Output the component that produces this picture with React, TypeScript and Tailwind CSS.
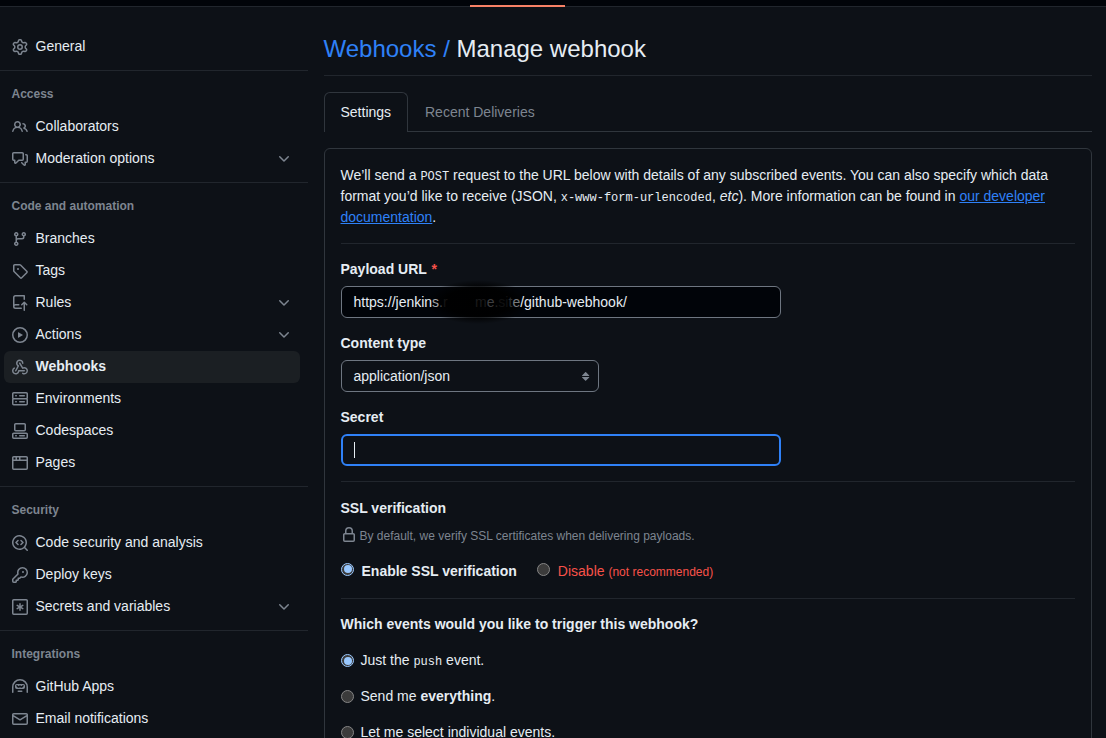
import type { ReactNode } from "react";

const ICONS = {
  gear: "M8 0a8.2 8.2 0 0 1 .701.031C9.444.095 9.99.645 10.16 1.29l.288 1.107c.018.066.079.158.212.224.231.114.454.243.668.386.123.082.233.09.299.071l1.103-.303c.644-.176 1.392.021 1.82.63.27.385.506.792.704 1.218.315.675.111 1.422-.364 1.891l-.814.806c-.049.048-.098.147-.088.294.016.257.016.515 0 .772-.01.147.038.246.088.294l.814.806c.475.469.679 1.216.364 1.891a7.977 7.977 0 0 1-.704 1.217c-.428.61-1.176.807-1.82.63l-1.102-.302c-.067-.019-.177-.011-.3.071a5.909 5.909 0 0 1-.668.386c-.133.066-.194.158-.211.224l-.29 1.106c-.168.646-.715 1.196-1.458 1.26a8.006 8.006 0 0 1-1.402 0c-.743-.064-1.289-.614-1.458-1.26l-.289-1.106c-.018-.066-.079-.158-.212-.224a5.738 5.738 0 0 1-.668-.386c-.123-.082-.233-.09-.299-.071l-1.103.303c-.644.176-1.392-.021-1.82-.63a8.12 8.12 0 0 1-.704-1.218c-.315-.675-.111-1.422.363-1.891l.815-.806c.05-.048.098-.147.088-.294a6.214 6.214 0 0 1 0-.772c.01-.147-.038-.246-.088-.294l-.815-.806C.635 6.045.431 5.298.746 4.623a7.92 7.92 0 0 1 .704-1.217c.428-.61 1.176-.807 1.82-.63l1.102.302c.067.019.177.011.3-.071.214-.143.437-.272.668-.386.133-.066.194-.158.211-.224l.29-1.106C6.009.645 6.556.095 7.299.03 7.53.01 7.764 0 8 0Zm-.571 1.525c-.036.003-.108.036-.137.146l-.289 1.105c-.147.561-.549.967-.998 1.189-.173.086-.34.183-.5.29-.417.278-.97.423-1.529.27l-1.103-.303c-.109-.03-.175.016-.195.045-.22.312-.412.644-.573.99-.014.031-.021.11.059.19l.815.806c.411.406.562.957.53 1.456a4.709 4.709 0 0 0 0 .582c.032.499-.119 1.05-.53 1.456l-.815.806c-.081.08-.073.159-.059.19.162.346.353.677.573.989.02.03.085.076.195.046l1.102-.303c.56-.153 1.113-.008 1.53.27.161.107.328.204.501.29.447.222.85.629.997 1.189l.289 1.105c.029.109.101.143.137.146a6.6 6.6 0 0 0 1.142 0c.036-.003.108-.036.137-.146l.289-1.105c.147-.561.549-.967.998-1.189.173-.086.34-.183.5-.29.417-.278.97-.423 1.529-.27l1.103.303c.109.029.175-.016.195-.045.22-.313.411-.644.573-.99.014-.031.021-.11-.059-.19l-.815-.806c-.411-.406-.562-.957-.53-1.456a4.709 4.709 0 0 0 0-.582c-.032-.499.119-1.05.53-1.456l.815-.806c.081-.08.073-.159.059-.19a6.464 6.464 0 0 0-.573-.989c-.02-.03-.085-.076-.195-.046l-1.102.303c-.56.153-1.113.008-1.53-.27a4.44 4.44 0 0 0-.501-.29c-.447-.222-.85-.629-.997-1.189l-.289-1.105c-.029-.11-.101-.143-.137-.146a6.6 6.6 0 0 0-1.142 0ZM11 8a3 3 0 1 1-6 0 3 3 0 0 1 6 0ZM9.5 8a1.5 1.5 0 1 0-3.001.001A1.5 1.5 0 0 0 9.5 8Z",
  people: "M2 5.5a3.5 3.5 0 1 1 5.898 2.549 5.508 5.508 0 0 1 3.034 4.084.75.75 0 1 1-1.482.235 4 4 0 0 0-7.9 0 .75.75 0 0 1-1.482-.236A5.507 5.507 0 0 1 3.102 8.05 3.493 3.493 0 0 1 2 5.5ZM11 4a3.001 3.001 0 0 1 2.22 5.018 5.01 5.01 0 0 1 2.56 3.012.749.749 0 0 1-.885.954.752.752 0 0 1-.549-.514 3.507 3.507 0 0 0-2.522-2.372.75.75 0 0 1-.574-.73v-.352a.75.75 0 0 1 .416-.672A1.5 1.5 0 0 0 11 5.5.75.75 0 0 1 11 4Zm-5.5-.5a2 2 0 1 0-.001 3.999A2 2 0 0 0 5.5 3.5Z",
  discussion: "M1.75 1h8.5c.966 0 1.75.784 1.75 1.75v5.5A1.75 1.75 0 0 1 10.25 10H7.061l-2.574 2.573A1.458 1.458 0 0 1 2 11.543V10h-.25A1.75 1.75 0 0 1 0 8.25v-5.5C0 1.784.784 1 1.75 1ZM1.5 2.75v5.5c0 .138.112.25.25.25h1a.75.75 0 0 1 .75.75v2.19l2.72-2.72a.749.749 0 0 1 .53-.22h3.5a.25.25 0 0 0 .25-.25v-5.5a.25.25 0 0 0-.25-.25h-8.5a.25.25 0 0 0-.25.25Zm13 2a.25.25 0 0 0-.25-.25h-.5a.75.75 0 0 1 0-1.5h.5c.966 0 1.75.784 1.75 1.75v5.5A1.75 1.75 0 0 1 14.25 12H14v1.543a1.458 1.458 0 0 1-2.487 1.03L9.22 12.28a.749.749 0 0 1 .326-1.275.749.749 0 0 1 .734.215l2.22 2.22v-2.19a.75.75 0 0 1 .75-.75h1a.25.25 0 0 0 .25-.25Z",
  branch: "M9.5 3.25a2.25 2.25 0 1 1 3 2.122V6A2.5 2.5 0 0 1 10 8.5H6a1 1 0 0 0-1 1v1.128a2.251 2.251 0 1 1-1.5 0V5.372a2.25 2.25 0 1 1 1.5 0v1.836A2.493 2.493 0 0 1 6 7h4a1 1 0 0 0 1-1v-.628A2.25 2.25 0 0 1 9.5 3.25Zm-6 0a.75.75 0 1 0 1.5 0 .75.75 0 0 0-1.5 0Zm8.25-.75a.75.75 0 1 0 0 1.5.75.75 0 0 0 0-1.5ZM4.25 12a.75.75 0 1 0 0 1.5.75.75 0 0 0 0-1.5Z",
  tag: "M1 7.775V2.75C1 1.784 1.784 1 2.75 1h5.025c.464 0 .91.184 1.238.513l6.25 6.25a1.75 1.75 0 0 1 0 2.474l-5.026 5.026a1.75 1.75 0 0 1-2.474 0l-6.25-6.25A1.752 1.752 0 0 1 1 7.775Zm1.5 0c0 .066.026.13.073.177l6.25 6.25a.25.25 0 0 0 .354 0l5.025-5.025a.25.25 0 0 0 0-.354l-6.25-6.25a.25.25 0 0 0-.177-.073H2.75a.25.25 0 0 0-.25.25ZM6 5a1 1 0 1 1 0 2 1 1 0 0 1 0-2Z",
  repoPush: "M1 2.5A2.5 2.5 0 0 1 3.5 0h8.75a.75.75 0 0 1 .75.75v3.5a.75.75 0 0 1-1.5 0V1.5h-8a1 1 0 0 0-1 1v6.708A2.493 2.493 0 0 1 3.5 9h3.25a.75.75 0 0 1 0 1.5H3.5a1 1 0 0 0 0 2h5.75a.75.75 0 0 1 0 1.5H3.5A2.5 2.5 0 0 1 1 11.5Zm13.23 7.79-1.224-1.224v6.184a.75.75 0 0 1-1.5 0V9.066L10.28 10.29a.75.75 0 0 1-1.06-1.061l2.505-2.504a.75.75 0 0 1 1.06 0L15.29 9.23a.751.751 0 0 1-.018 1.042.751.751 0 0 1-1.042.018Z",
  play: "M8 0a8 8 0 1 1 0 16A8 8 0 0 1 8 0ZM1.5 8a6.5 6.5 0 1 0 13 0 6.5 6.5 0 0 0-13 0Zm4.879-2.773 4.264 2.559a.25.25 0 0 1 0 .428l-4.264 2.559A.25.25 0 0 1 6 10.559V5.442a.25.25 0 0 1 .379-.215Z",
  webhook: "M5.5 4.25a2.25 2.25 0 0 1 4.5 0 .75.75 0 0 0 1.5 0 3.75 3.75 0 1 0-6.14 2.889l-2.272 4.258a.75.75 0 0 0 1.324.706L7 7.25a.75.75 0 0 0-.309-1.015A2.25 2.25 0 0 1 5.5 4.25ZM7.364 3.607a.75.75 0 0 1 1.03.257l2.608 4.349a3.75 3.75 0 1 1-.628 6.785.75.75 0 0 1 .752-1.299 2.25 2.25 0 1 0-.033-3.88.75.75 0 0 1-1.03-.256L7.107 4.636a.75.75 0 0 1 .257-1.03ZM2.9 8.776A.75.75 0 0 1 2.625 9.8 2.25 2.25 0 1 0 6 11.75a.75.75 0 0 1 .75-.751h5.5a.75.75 0 0 1 0 1.5H7.425a3.751 3.751 0 1 1-5.55-3.998.75.75 0 0 1 1.024.274Z",
  server: "M1.75 1h12.5c.966 0 1.75.784 1.75 1.75v4c0 .372-.116.717-.314 1 .198.283.314.628.314 1v4a1.75 1.75 0 0 1-1.75 1.75H1.75A1.75 1.75 0 0 1 0 12.75v-4c0-.358.109-.707.314-1a1.739 1.739 0 0 1-.314-1v-4C0 1.784.784 1 1.75 1ZM1.5 2.75v4c0 .138.112.25.25.25h12.5a.25.25 0 0 0 .25-.25v-4a.25.25 0 0 0-.25-.25H1.75a.25.25 0 0 0-.25.25Zm.25 5.75a.25.25 0 0 0-.25.25v4c0 .138.112.25.25.25h12.5a.25.25 0 0 0 .25-.25v-4a.25.25 0 0 0-.25-.25ZM7 4.75A.75.75 0 0 1 7.75 4h4.5a.75.75 0 0 1 0 1.5h-4.5A.75.75 0 0 1 7 4.75ZM7.75 10h4.5a.75.75 0 0 1 0 1.5h-4.5a.75.75 0 0 1 0-1.5ZM3 4.75A.75.75 0 0 1 3.75 4h.5a.75.75 0 0 1 0 1.5h-.5A.75.75 0 0 1 3 4.75ZM3.75 10h.5a.75.75 0 0 1 0 1.5h-.5a.75.75 0 0 1 0-1.5Z",
  codespaces: "M0 11.25c0-.966.784-1.75 1.75-1.75h12.5c.966 0 1.75.784 1.75 1.75v3A1.75 1.75 0 0 1 14.25 16H1.75A1.75 1.75 0 0 1 0 14.25Zm2-9.5C2 .784 2.784 0 3.75 0h8.5C13.216 0 14 .784 14 1.75v5a1.75 1.75 0 0 1-1.75 1.75h-8.5A1.75 1.75 0 0 1 2 6.75Zm1.75-.25a.25.25 0 0 0-.25.25v5c0 .138.112.25.25.25h8.5a.25.25 0 0 0 .25-.25v-5a.25.25 0 0 0-.25-.25Zm-2 9.5a.25.25 0 0 0-.25.25v3c0 .138.112.25.25.25h12.5a.25.25 0 0 0 .25-.25v-3a.25.25 0 0 0-.25-.25ZM7 12.75a.75.75 0 0 1 .75-.75h4.5a.75.75 0 0 1 0 1.5h-4.5a.75.75 0 0 1-.75-.75Zm-4 0a.75.75 0 0 1 .75-.75h.5a.75.75 0 0 1 0 1.5h-.5a.75.75 0 0 1-.75-.75Z",
  browser: "M0 2.75C0 1.784.784 1 1.75 1h12.5c.966 0 1.75.784 1.75 1.75v10.5A1.75 1.75 0 0 1 14.25 15H1.75A1.75 1.75 0 0 1 0 13.25ZM14.5 6h-13v7.25c0 .138.112.25.25.25h12.5a.25.25 0 0 0 .25-.25Zm-6-3.5v2h6V2.75a.25.25 0 0 0-.25-.25ZM5 2.5v2h2v-2Zm-3.25 0a.25.25 0 0 0-.25.25V4.5h2v-2Z",
  codescan: "M8.47 4.97a.75.75 0 0 0 0 1.06L9.94 7.5 8.47 8.97a.75.75 0 1 0 1.06 1.06l2-2a.75.75 0 0 0 0-1.06l-2-2a.75.75 0 0 0-1.06 0ZM6.53 6.03a.75.75 0 0 0-1.06-1.06l-2 2a.75.75 0 0 0 0 1.06l2 2a.75.75 0 1 0 1.06-1.06L5.06 7.5l1.47-1.47ZM12.246 13.307a7.501 7.501 0 1 1 1.06-1.06l2.474 2.473a.749.749 0 0 1-.326 1.275.749.749 0 0 1-.734-.215ZM1.5 7.5a6.002 6.002 0 0 0 3.608 5.504 6.002 6.002 0 0 0 6.486-1.117.748.748 0 0 1 .292-.293A6 6 0 1 0 1.5 7.5Z",
  key: "M10.5 0a5.499 5.499 0 1 1-1.288 10.848l-.932.932a.749.749 0 0 1-.53.22H7v.75a.749.749 0 0 1-.22.53l-.5.5a.749.749 0 0 1-.53.22H5v.75a.749.749 0 0 1-.22.53l-.5.5a.749.749 0 0 1-.53.22h-2A1.75 1.75 0 0 1 0 14.25v-2c0-.199.079-.389.22-.53l4.932-4.932A5.5 5.5 0 0 1 10.5 0Zm-4 5.5c-.001.431.069.86.205 1.269a.75.75 0 0 1-.181.768L1.5 12.56v1.69c0 .138.112.25.25.25h1.69l.06-.06v-1.19a.75.75 0 0 1 .75-.75h1.19l.06-.06v-1.19a.75.75 0 0 1 .75-.75h1.19l1.023-1.025a.75.75 0 0 1 .768-.18A4 4 0 1 0 6.5 5.5ZM11 6a1 1 0 1 1 0-2 1 1 0 0 1 0 2Z",
  asterisk: "M0 1.75C0 .784.784 0 1.75 0h12.5C15.216 0 16 .784 16 1.75v12.5A1.75 1.75 0 0 1 14.25 16H1.75A1.75 1.75 0 0 1 0 14.25ZM1.75 1.5a.25.25 0 0 0-.25.25v12.5c0 .138.112.25.25.25h12.5a.25.25 0 0 0 .25-.25V1.75a.25.25 0 0 0-.25-.25ZM8 4a.75.75 0 0 1 .75.75V6.7l1.69-.975a.75.75 0 0 1 .75 1.3L9.5 8l1.69.976a.75.75 0 0 1-.75 1.298L8.75 9.3v1.951a.75.75 0 0 1-1.5 0V9.299l-1.69.976a.75.75 0 0 1-.75-1.3L6.5 8l-1.69-.975a.75.75 0 0 1 .75-1.3l1.69.976V4.75A.75.75 0 0 1 8 4Z",
  hubot: "M0 8a8 8 0 1 1 16 0v5.25a.75.75 0 0 1-1.5 0V8a6.5 6.5 0 1 0-13 0v5.25a.75.75 0 0 1-1.5 0Zm5.5 4.25a.75.75 0 0 1 .75-.75h3.5a.75.75 0 0 1 0 1.5h-3.5a.75.75 0 0 1-.75-.75ZM3 6.75C3 5.784 3.784 5 4.75 5h6.5c.966 0 1.75.784 1.75 1.75v1.5A1.75 1.75 0 0 1 11.25 10h-6.5A1.75 1.75 0 0 1 3 8.25Zm1.47-.53a.75.75 0 0 0 0 1.06l.9.9c.69.69 1.81.69 2.5 0l.13-.13.13.13c.69.69 1.81.69 2.5 0l.9-.9a.75.75 0 0 0-1.06-1.06l-.9.9a.27.27 0 0 1-.38 0l-.66-.66a.75.75 0 0 0-1.06 0l-.66.66a.27.27 0 0 1-.38 0l-.9-.9a.75.75 0 0 0-1.06 0Z",
  mail: "M1.75 2h12.5c.966 0 1.75.784 1.75 1.75v8.5A1.75 1.75 0 0 1 14.25 14H1.75A1.75 1.75 0 0 1 0 12.25v-8.5C0 2.784.784 2 1.75 2ZM1.5 12.251c0 .138.112.25.25.25h12.5a.25.25 0 0 0 .25-.25V5.809L8.38 9.397a.75.75 0 0 1-.76 0L1.5 5.809v6.442Zm13-8.181v-.32a.25.25 0 0 0-.25-.25H1.75a.25.25 0 0 0-.25.25v.32L8 7.88Z",
  lock: "M4 4a4 4 0 0 1 8 0v2h.25c.966 0 1.75.784 1.75 1.75v5.5A1.75 1.75 0 0 1 12.25 15h-8.5A1.75 1.75 0 0 1 2 13.25v-5.5C2 6.784 2.784 6 3.75 6H4Zm8.25 3.5h-8.5a.25.25 0 0 0-.25.25v5.5c0 .138.112.25.25.25h8.5a.25.25 0 0 0 .25-.25v-5.5a.25.25 0 0 0-.25-.25ZM10.5 6V4a2.5 2.5 0 1 0-5 0v2Z",
  chevron: "M12.78 5.22a.749.749 0 0 1 0 1.06l-4.25 4.25a.749.749 0 0 1-1.06 0L3.22 6.28a.749.749 0 1 1 1.06-1.06L8 8.939l3.72-3.719a.749.749 0 0 1 1.06 0Z",
  updown: "m4.074 9.427 3.396 3.396a.25.25 0 0 0 .354 0l3.396-3.396A.25.25 0 0 0 11.043 9H4.251a.25.25 0 0 0-.177.427ZM4.074 7.47 7.47 4.073a.25.25 0 0 1 .354 0L11.22 7.47a.25.25 0 0 1-.177.426H4.251a.25.25 0 0 1-.177-.426Z",
};

type IconName = keyof typeof ICONS;

function Icon({ name, className = "" }: { name: IconName; className?: string }) {
  return (
    <svg viewBox="0 0 16 16" width="16" height="16" fill="currentColor" className={`shrink-0 text-[#7d8590] ${className}`}>
      <path d={ICONS[name]} />
    </svg>
  );
}

type Item = { icon: IconName; label: string; more?: boolean; active?: boolean };

const groups: { title?: string; items: Item[] }[] = [
  { items: [{ icon: "gear", label: "General" }] },
  {
    title: "Access",
    items: [
      { icon: "people", label: "Collaborators" },
      { icon: "discussion", label: "Moderation options", more: true },
    ],
  },
  {
    title: "Code and automation",
    items: [
      { icon: "branch", label: "Branches" },
      { icon: "tag", label: "Tags" },
      { icon: "repoPush", label: "Rules", more: true },
      { icon: "play", label: "Actions", more: true },
      { icon: "webhook", label: "Webhooks", active: true },
      { icon: "server", label: "Environments" },
      { icon: "codespaces", label: "Codespaces" },
      { icon: "browser", label: "Pages" },
    ],
  },
  {
    title: "Security",
    items: [
      { icon: "codescan", label: "Code security and analysis" },
      { icon: "key", label: "Deploy keys" },
      { icon: "asterisk", label: "Secrets and variables", more: true },
    ],
  },
  {
    title: "Integrations",
    items: [
      { icon: "hubot", label: "GitHub Apps" },
      { icon: "mail", label: "Email notifications" },
    ],
  },
];

function Sidebar() {
  return (
    <nav className="w-[308px] shrink-0 pt-6">
      {groups.map((group, i) => (
        <section key={i} className={i > 0 ? "mt-[7px] border-t border-[#21262d]" : ""}>
          {group.title && (
            <h3 className="h-10 pl-[11.5px] pt-[14px] text-xs leading-[18px] font-bold text-[#7d8590]">{group.title}</h3>
          )}
          <ul className="pl-1 pr-2">
            {group.items.map((item) => (
              <li
                key={item.label}
                className={`flex h-8 items-center rounded-md px-2 ${item.active ? "bg-[#1b1f23] font-bold" : ""}`}
              >
                <Icon name={item.icon} />
                <span className="ml-[7.5px] grow pb-[2px] leading-5">{item.label}</span>
                {item.more && <Icon name="chevron" />}
              </li>
            ))}
          </ul>
        </section>
      ))}
    </nav>
  );
}

function Radio({ checked = false }: { checked?: boolean }) {
  return (
    <span
      className={`flex size-[13px] shrink-0 items-center justify-center rounded-full border bg-[#3b3b3b] ${
        checked ? "border-[#99c8ff]" : "border-[#858585]"
      }`}
    >
      {checked && <span className="size-[8px] rounded-full bg-[#99c8ff]" />}
    </span>
  );
}

function Label({ children, className = "" }: { children: ReactNode; className?: string }) {
  return <div className={`-ml-[0.5px] h-[21px] leading-[21px] font-bold ${className}`}>{children}</div>;
}

function Code({ children }: { children: ReactNode }) {
  return <code className="font-['Liberation_Mono',monospace] text-xs">{children}</code>;
}

export default function App() {
  return (
    <div className="flex h-[738px] w-[1106px] flex-col overflow-hidden bg-[#0d1117] font-['Liberation_Sans',Arial,sans-serif] text-sm text-[#e6edf3]">
      <header className="relative h-[7px] shrink-0 border-b border-[#21262d] bg-[#010409]">
        <span className="absolute top-[5px] left-[469.6px] h-[2px] w-[95px] bg-[#f78166]" />
      </header>
      <div className="flex grow">
        <Sidebar />
        <main className="ml-4 w-[768px] shrink-0">
          <h1 className="h-[69px] border-b border-[#21262d] pt-6 text-2xl leading-9">
            <span className="-ml-[0.5px] text-[#2f81f7]">Webhooks /</span> Manage webhook
          </h1>
          <div className="mt-4 flex h-10">
            <div className="w-[84px] shrink-0 rounded-t-md border border-b-0 border-[#30363d] pt-2 pl-[15.5px] leading-[23px]">
              Settings
            </div>
            <div className="grow border-b border-[#30363d] pt-[9px] pl-[17px] leading-[23px] text-[#7d8590]">
              Recent Deliveries
            </div>
          </div>
          <div className="mt-4 h-[620px] rounded-md border border-[#30363d] px-4 pt-4">
            <p className="-ml-[0.5px] h-[63px] leading-[21px] whitespace-nowrap">
              We’ll send a <Code>POST</Code> request to the URL below with details of any subscribed events. You can also specify which data
              <br />
              format you’d like to receive (JSON, <Code>x-www-form-urlencoded</Code>, <em>etc</em>). More information can be found in{" "}
              <a className="text-[#2f81f7] underline">our developer</a>
              <br />
              <a className="text-[#2f81f7] underline">documentation</a>.
            </p>
            <hr className="mt-[15px] border-[#21262d]" />
            <Label className="mt-[15px]">
              Payload URL <span className="ml-[1px] text-[#f85149]">*</span>
            </Label>
            <div className="relative isolate mt-[6px] flex h-8 w-[440px] items-center rounded-md border border-[#6e7681] bg-[#010409] px-[11.5px] leading-5">
              <span className="absolute top-[-7px] left-[84px] -z-10 h-[44px] w-[104px] bg-[radial-gradient(ellipse_at_center,rgba(0,0,0,0.97)_0%,rgba(0,0,0,0.9)_45%,rgba(0,0,0,0)_71%)]" />
              <span>https://jenkin</span>
              <span className="text-[#a0a4a8]">s</span>
              <span className="text-[#45484c]">.</span>
              <span className="w-[32px] text-[#141414]">r</span>
              <span className="text-[#1a1a1b]">m</span>
              <span className="text-[#3d3e40]">e</span>
              <span className="text-[#222223]">.</span>
              <span className="text-[#111112]">si</span>
              <span className="text-[#2c2d2f]">t</span>
              <span className="text-[#77797d]">e</span>
              <span>/github-webhook/</span>
            </div>
            <Label className="mt-[15px]">Content type</Label>
            <div className="mt-[6px] flex h-8 w-[258px] items-center justify-between rounded-md border border-[#6e7681] pr-1 pl-[11.5px] leading-5">
              <span>application/json</span>
              <Icon name="updown" />
            </div>
            <Label className="mt-[15px]">Secret</Label>
            <div className="mt-[6px] flex h-8 w-[440px] items-center rounded-md border-2 border-[#2f81f7] pl-[11px]">
              <span className="h-4 w-px bg-[#e6edf3]" />
            </div>
            <hr className="mt-[15px] border-[#21262d]" />
            <Label className="mt-[16px]">SSL verification</Label>
            <div className="-ml-[0.5px] mt-[8px] flex h-[18px] items-center text-xs leading-[18px] text-[#7d8590]">
              <Icon name="lock" className="-mt-[3px]" />
              <span className="ml-[3px]">By default, we verify SSL certificates when delivering payloads.</span>
            </div>
            <div className="mt-[16px] flex h-[21px] items-center leading-[21px]">
              <span className="-mt-[5px]"><Radio checked /></span>
              <span className="ml-[7.5px] font-bold">Enable SSL verification</span>
              <span className="-mt-[5px] ml-5"><Radio /></span>
              <span className="ml-[8px] text-[#f85149]">
                Disable <small className="text-xs">(not recommended)</small>
              </span>
            </div>
            <hr className="mt-[16px] border-[#21262d]" />
            <Label className="mt-[15px]">Which events would you like to trigger this webhook?</Label>
            <div className="mt-[15px] flex flex-col gap-[15px] leading-[21px]">
              <div className="flex h-[21px] items-center">
                <Radio checked />
                <span className="ml-[6.5px]">Just the <Code>push</Code> event.</span>
              </div>
              <div className="flex h-[21px] items-center">
                <Radio />
                <span className="ml-[6.5px]">Send me <b>everything</b>.</span>
              </div>
              <div className="flex h-[21px] items-center">
                <Radio />
                <span className="ml-[6.5px]">Let me select individual events.</span>
              </div>
            </div>
          </div>
        </main>
      </div>
    </div>
  );
}
